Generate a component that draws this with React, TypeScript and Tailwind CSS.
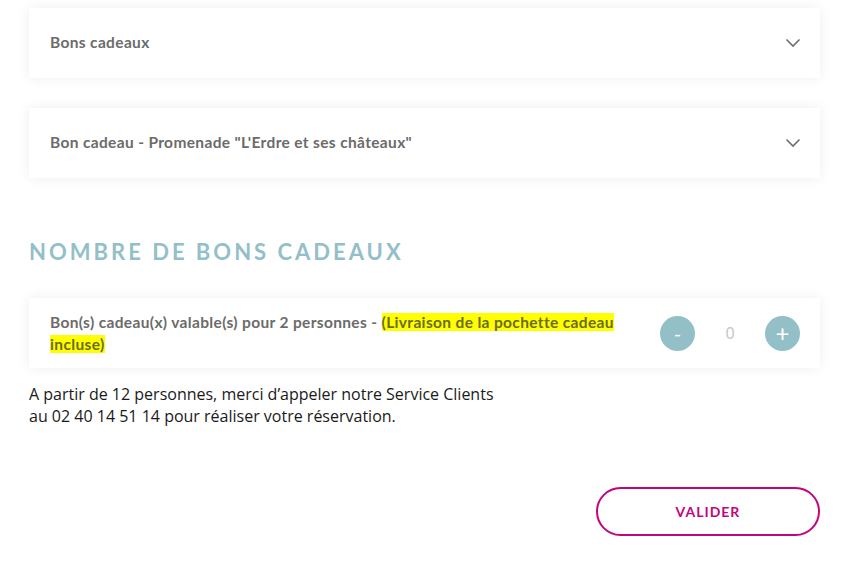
import React, { useState } from 'react'

function Chevron() {
  return (
    <svg width="16" height="10" viewBox="0 0 16 10" fill="none" className="text-[#6e6e6e]">
      <path d="M1.5 1.5 L8 8 L14.5 1.5" stroke="currentColor" strokeWidth="1.6" />
    </svg>
  )
}

function AccordionCard({ title }: { title: string }) {
  return (
    <div className="bg-white h-[70px] flex items-center justify-between pl-[21px] pr-[19px] shadow-[0_0_12px_rgba(0,0,0,0.07)]">
      <span className="text-[15.5px] font-bold text-[#6b6b6b] tracking-[0.35px]">{title}</span>
      <Chevron />
    </div>
  )
}

export default function App(): React.ReactElement {
  const [count, setCount] = useState(0)

  return (
    <div className="w-[864px] h-[582px] bg-white overflow-hidden font-['Lato',sans-serif]">
      <div className="ml-[29px] w-[791px] pt-2">
        <AccordionCard title="Bons cadeaux" />
        <div className="mt-[30px]">
          <AccordionCard title={'Bon cadeau - Promenade "L\'Erdre et ses châteaux"'} />
        </div>

        {/* Nombre de bons */}
        <h2 className="mt-[60px] text-[22px] font-bold tracking-[3px] text-[#93c0c8] leading-[28px]">
          NOMBRE DE BONS CADEAUX
        </h2>

        <div className="mt-[32px] bg-white h-[70px] flex items-center justify-between pl-[21px] pr-[20px] shadow-[0_0_12px_rgba(0,0,0,0.07)]">
          <p className="w-[578px] text-[15.5px] font-bold text-[#6b6b6b] leading-[22px] tracking-[0.35px]">
            Bon(s) cadeau(x) valable(s) pour 2 personnes -{' '}
            <span className="bg-[#ffff00] text-[#6b6b22]">(Livraison de la pochette cadeau incluse)</span>
          </p>
          <div className="flex items-center">
            <button
              onClick={() => setCount(Math.max(0, count - 1))}
              className="w-[35px] h-[35px] rounded-full bg-[#93bfc7] text-white text-[20px] leading-none flex items-center justify-center"
            >
              -
            </button>
            <span className="w-[70px] text-center text-[16px] text-[#c4c4c4] font-['Open_Sans',sans-serif]">{count}</span>
            <button
              onClick={() => setCount(count + 1)}
              className="w-[35px] h-[35px] rounded-full bg-[#93bfc7] text-white text-[24px] leading-none flex items-center justify-center"
            >
              +
            </button>
          </div>
        </div>

        <p className="mt-[15px] text-[16px] leading-[22px] text-[#1a1a1a] font-['Open_Sans',sans-serif]">
          A partir de 12 personnes, merci d’appeler notre Service Clients
          <br />
          au 02 40 14 51 14 pour réaliser votre réservation.
        </p>

        <div className="flex justify-end mt-[60px]">
          <button className="w-[224px] h-[49px] rounded-full border-2 border-[#c2047f] text-[#c2047f] text-[14px] font-bold tracking-[1px]">
            VALIDER
          </button>
        </div>
      </div>
    </div>
  )
}
